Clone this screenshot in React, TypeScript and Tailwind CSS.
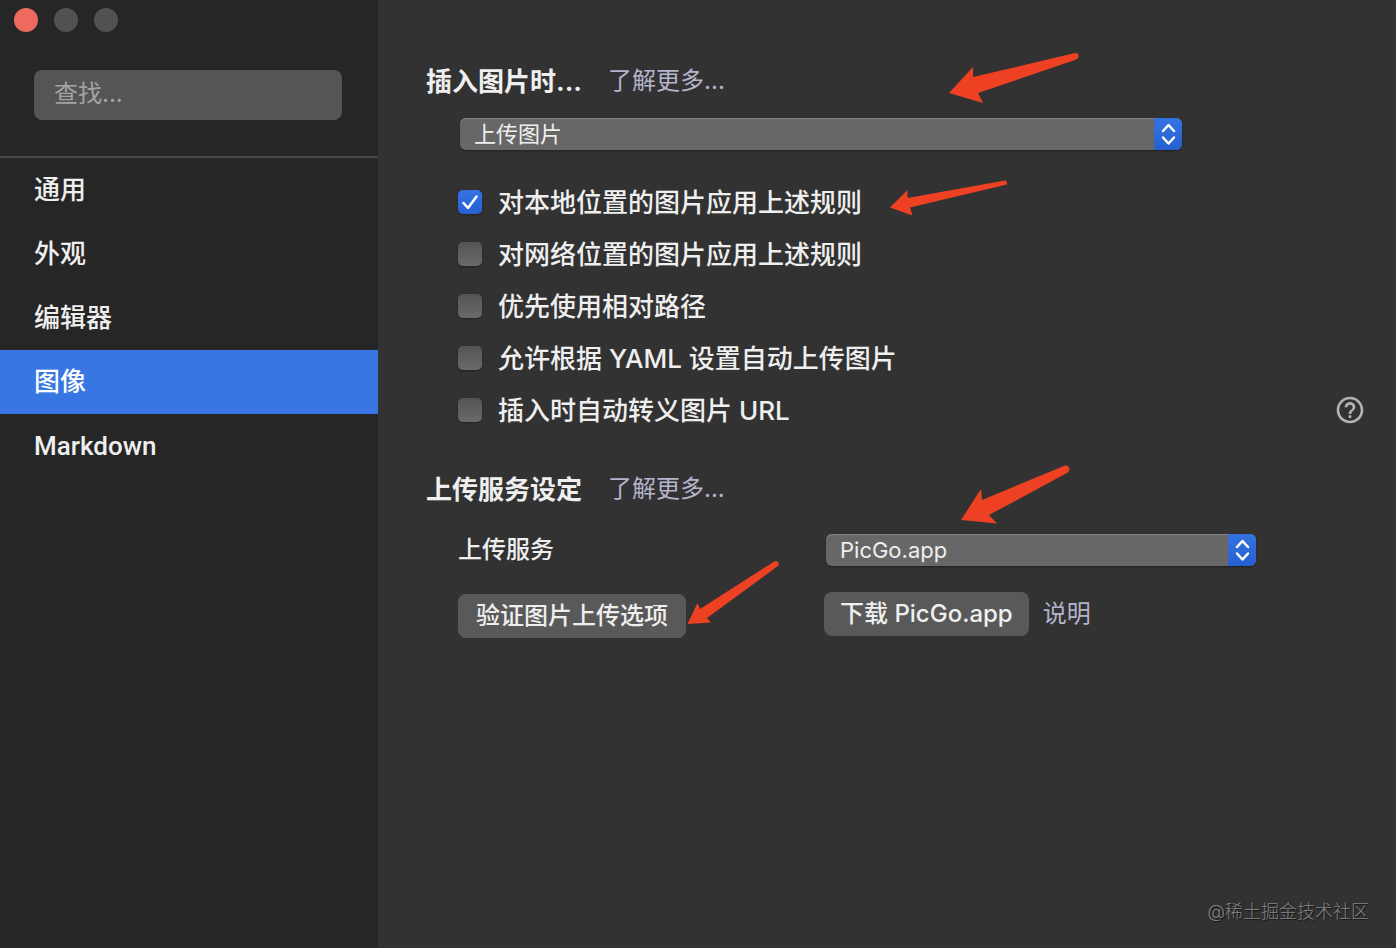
import React, { useState } from "react";
import clsx from "clsx";
import { MdHelpOutline } from "react-icons/md";

const NAV_ITEMS = ["通用", "外观", "编辑器", "图像", "Markdown"];

const RULES = [
  { id: "local", label: "对本地位置的图片应用上述规则", checked: true },
  { id: "remote", label: "对网络位置的图片应用上述规则", checked: false },
  { id: "relative", label: "优先使用相对路径", checked: false },
  { id: "yaml", label: "允许根据 YAML 设置自动上传图片", checked: false },
  { id: "escape", label: "插入时自动转义图片 URL", checked: false },
];

export default function App() {
  return (
    <div className="flex min-h-screen bg-[#323232] font-['Inter','Noto_Sans_CJK_SC',sans-serif] text-[#efefef]">
      <Sidebar />
      <main className="flex min-w-0 flex-1 flex-col pl-12 pt-[63px]">
        <InsertSection />
        <UploadSection />
        <p className="mb-[22px] mr-[27px] mt-auto self-end text-lg font-light text-[#858585] [text-shadow:1px_1px_1px_#111]">
          @稀土掘金技术社区
        </p>
      </main>
    </div>
  );
}

function Sidebar() {
  const [active, setActive] = useState("图像");

  return (
    <aside className="w-[378px] shrink-0 bg-[#262626]">
      <div className="flex gap-4 px-3.5 pt-2">
        <button aria-label="关闭" className="size-6 rounded-full bg-[#ee6a5f]" />
        <button aria-label="最小化" className="size-6 rounded-full bg-[#525252]" />
        <button aria-label="缩放" className="size-6 rounded-full bg-[#525252]" />
      </div>
      <div className="border-b-2 border-[#474747] px-[34px] pb-9 pt-[38px]">
        <input
          type="text"
          aria-label="查找"
          placeholder="查找..."
          className="block h-[50px] w-[308px] rounded-lg bg-[#555] px-5 pb-1 text-2xl text-white outline-none placeholder:text-[#a3a3a3]"
        />
      </div>
      <nav className="font-['Roboto','Noto_Sans_CJK_SC',sans-serif]">
        {NAV_ITEMS.map((item) => (
          <button
            key={item}
            onClick={() => setActive(item)}
            className={clsx(
              "block h-16 w-full px-[34px] text-left text-[26px] font-medium",
              item === active && "bg-[#3776e3] text-white"
            )}
          >
            {item}
          </button>
        ))}
      </nav>
    </aside>
  );
}

function InsertSection() {
  return (
    <section>
      <SectionTitle title="插入图片时..." />
      <div className="relative ml-[34px] mt-[19px] max-w-[722px]">
        <PopupSelect label="插入图片时" options={["上传图片", "无特殊操作"]} />
        <Arrow
          className="-top-[68px] left-[486px] h-[54px] w-[134px]"
          viewBox="946 50 134 54"
          d="M949 93 L973 67 L973 77 L1075 53 Q1079 53 1078.500 57 Q1078 59 1075 60 L978 93 L983 103 Z"
        />
      </div>
      <div className="relative ml-8 mt-[26px]">
        {RULES.map((rule) => (
          <RuleRow key={rule.id} {...rule} />
        ))}
        <Arrow
          className="left-[430px] top-1 h-9 w-[122px]"
          viewBox="888 180 122 36"
          d="M890 207.500 L907.500 190 L907.500 198 L1005 180.500 Q1007.500 181 1007 184.500 L910 207.500 L912.500 215.500 Z"
        />
      </div>
    </section>
  );
}

function UploadSection() {
  return (
    <section className="mt-[35px]">
      <SectionTitle title="上传服务设定" />
      <div className="relative ml-8 mt-[27px] grid grid-cols-[366px_1fr]">
        <div className="flex flex-col items-start gap-7">
          <label htmlFor="service" className="text-2xl font-medium">
            上传服务
          </label>
          <PushButton>验证图片上传选项</PushButton>
        </div>
        <div className="flex flex-col gap-[26px]">
          <div className="relative ml-0.5 max-w-[430px]">
            <PopupSelect id="service" options={["PicGo.app", "iPic", "uPic"]} />
          </div>
          <div className="flex items-center gap-3.5">
            <PushButton>下载 PicGo.app</PushButton>
            <a href="#help" className="text-2xl text-[#b4b4cc]">
              说明
            </a>
          </div>
        </div>
        <Arrow
          className="-top-[70px] left-[500px] h-[60px] w-[114px]"
          viewBox="958 464 114 60"
          d="M961 520 L981 489 L982 500 L1065 465.500 Q1069 465 1069.500 469 Q1069 472 1067 473 L989 515 L997 523.500 Z"
        />
        <Arrow
          className="left-[228px] top-6 h-[68px] w-[96px]"
          viewBox="686 558 96 68"
          d="M687.500 624 L697.500 603 L700 609 L775 561 Q778.500 561 779 564 L778 566 L707 618 L711 622.500 Z"
        />
      </div>
    </section>
  );
}

function SectionTitle({ title }: { title: string }) {
  return (
    <div className="flex h-9 items-center gap-[26px]">
      <h2 className="text-[26px] font-bold">{title}</h2>
      <a href="#more" className="text-2xl text-[#b4b4cc]">
        了解更多...
      </a>
    </div>
  );
}

interface RuleRowProps {
  id: string;
  label: string;
  checked: boolean;
}

function RuleRow({ id, label, checked }: RuleRowProps) {
  return (
    <div className="flex h-[52px] items-center pr-[30px]">
      <span className="grid size-6 shrink-0 place-items-center">
        <input
          id={id}
          type="checkbox"
          defaultChecked={checked}
          className="peer col-start-1 row-start-1 size-6 appearance-none rounded-[5px] bg-linear-to-b from-[#545454] to-[#6a6a6a] shadow-[0_1px_2px_#00000055] checked:from-[#3472e4] checked:to-[#2660d2]"
        />
        <svg
          viewBox="0 0 24 24"
          className="pointer-events-none invisible col-start-1 row-start-1 size-6 fill-none stroke-white stroke-[2.5] peer-checked:visible"
          strokeLinecap="round"
          strokeLinejoin="round"
        >
          <path d="M5.500 13 L10 18 L18.500 6.500" />
        </svg>
      </span>
      <label htmlFor={id} className="pl-4 text-[26px] font-medium">
        {label}
      </label>
      {id === "escape" && (
        <button aria-label="帮助" className="ml-auto text-[#b3b3b3]">
          <MdHelpOutline size={32} />
        </button>
      )}
    </div>
  );
}

interface PopupSelectProps {
  id?: string;
  label?: string;
  options: string[];
}

function PopupSelect({ id, label, options }: PopupSelectProps) {
  return (
    <>
      <select
        id={id}
        aria-label={label}
        className="block h-8 w-full appearance-none rounded-md bg-[#676767] px-3.5 text-[22px] leading-8 shadow-[inset_0_1px_0_#828282,0_1px_2px_#00000066] outline-none"
      >
        {options.map((option) => (
          <option key={option}>{option}</option>
        ))}
      </select>
      <svg
        viewBox="0 0 28 32"
        className="pointer-events-none absolute right-0 top-0 h-8 w-7 rounded-r-md bg-linear-to-b from-[#3472e2] to-[#2660d0] fill-none stroke-white stroke-[2.5]"
        strokeLinecap="round"
        strokeLinejoin="round"
      >
        <path d="M9 13 L14.500 7 L20 13 M9 19.500 L14.500 25.500 L20 19.500" />
      </svg>
    </>
  );
}

function PushButton({ children }: { children: React.ReactNode }) {
  return (
    <button className="h-11 rounded-lg bg-[#595959] px-4 text-2xl font-medium first:min-w-[204px] last:min-w-[228px]">
      {children}
    </button>
  );
}

interface ArrowProps {
  className: string;
  viewBox: string;
  d: string;
}

function Arrow({ className, viewBox, d }: ArrowProps) {
  return (
    <svg
      viewBox={viewBox}
      className={clsx("pointer-events-none absolute fill-[#ee4023]", className)}
    >
      <path d={d} />
    </svg>
  );
}
